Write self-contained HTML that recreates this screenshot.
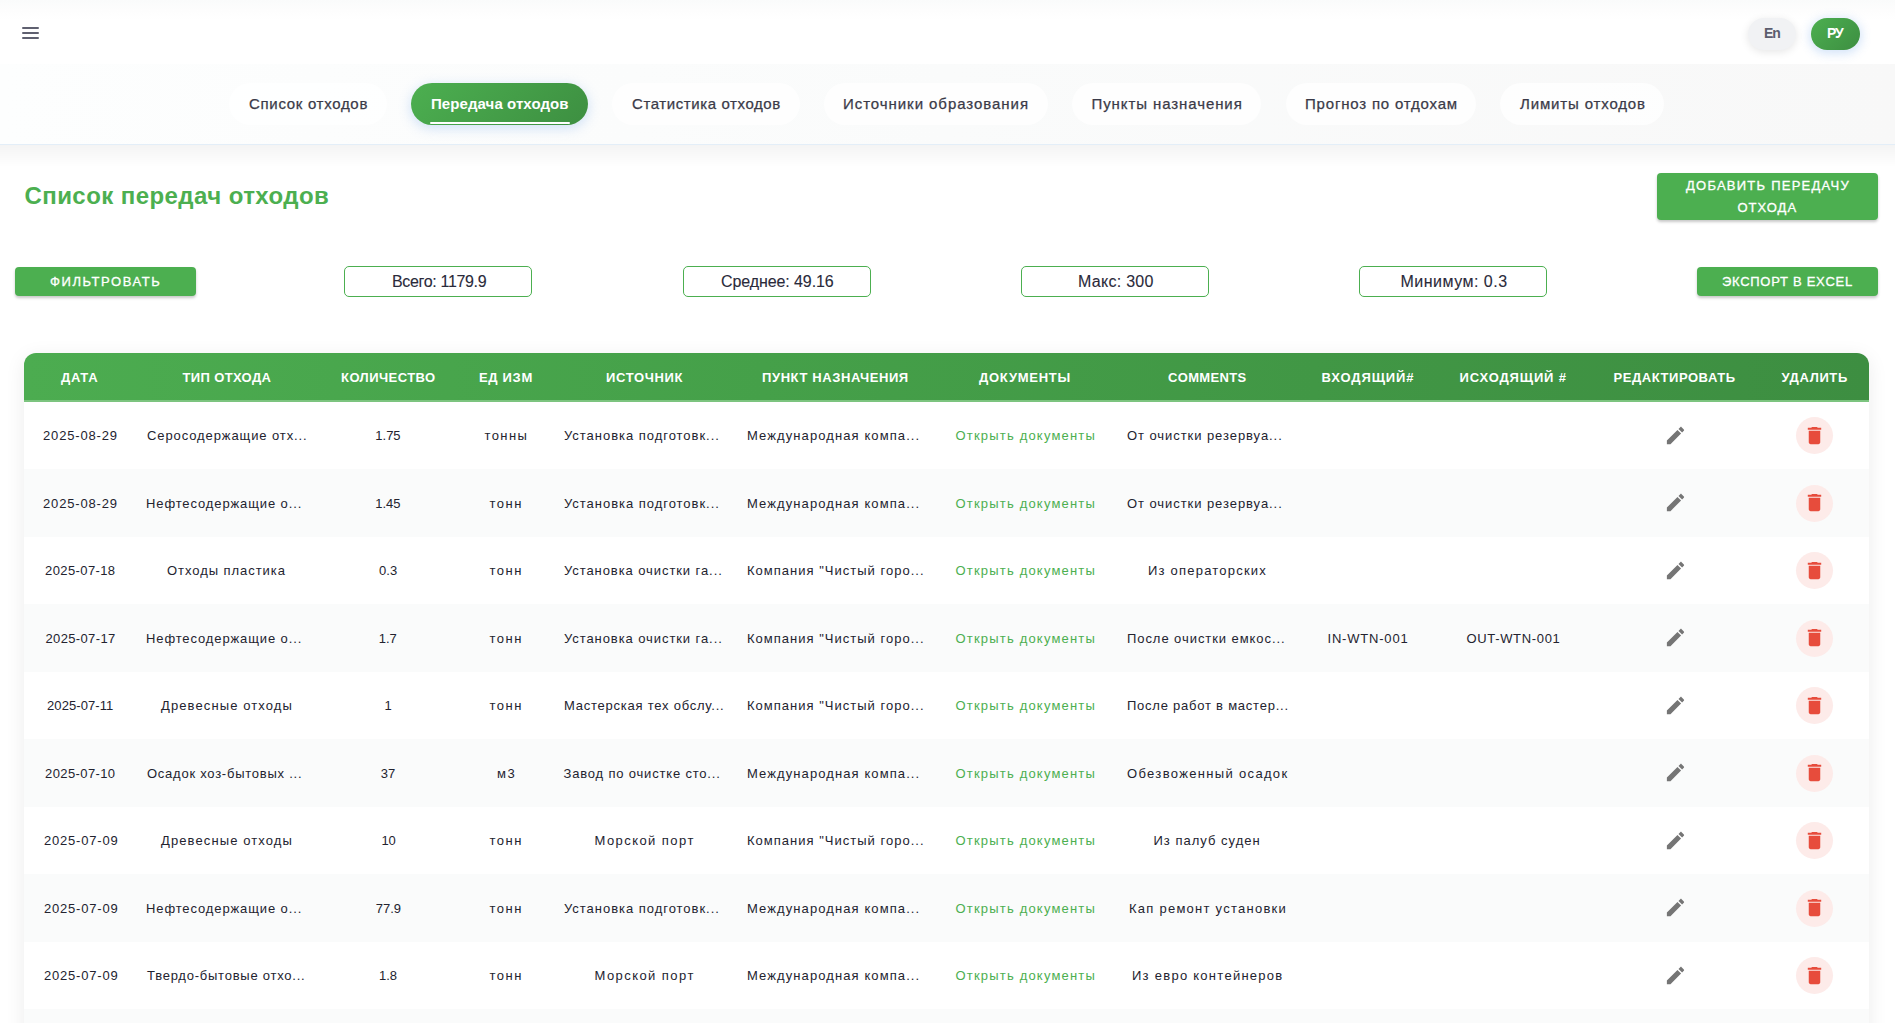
<!DOCTYPE html>
<html><head><meta charset="utf-8"><title>Передача отходов</title>
<style>
html,body{margin:0;padding:0}
body{width:1895px;height:1023px;overflow:hidden;position:relative;background:#ffffff;font-family:"Liberation Sans", sans-serif}
.t{position:absolute;white-space:nowrap;font-family:"Liberation Sans", sans-serif}
.topbar{position:absolute;left:0;top:0;width:1895px;height:64px;background:linear-gradient(180deg,#fafbfb 0px,#fdfdfd 10px,#ffffff 20px)}
.navsh{position:absolute;left:0;top:145px;width:1895px;height:22px;background:linear-gradient(180deg,rgba(0,0,0,0.045),rgba(0,0,0,0))}
.nav{position:absolute;left:0;top:64px;width:1895px;height:80px;background:linear-gradient(90deg,#fdfefe 0%,#fafbfb 50%,#f8f8f8 100%);border-bottom:1px solid #e3eef8}
.pill{position:absolute;top:83px;height:42px;border-radius:21px;background:rgba(255,255,255,0.75)}
.pill.act{background:linear-gradient(135deg,#4caf50 0%,#3d8f41 100%);box-shadow:0 3px 12px 1px rgba(120,170,235,0.3)}
.uline{position:absolute;left:430px;top:122px;width:140px;height:2px;border-radius:1px;background:#ffffff}
.ham{position:absolute;left:22px;width:17px;height:2px;background:#5f6070;border-radius:1px}
.lang{position:absolute;top:18px;height:32px;border-radius:16px}
.btn{position:absolute;background:#4caf50;border-radius:4px;box-shadow:0 2px 3px rgba(0,0,0,0.22)}
.stat{position:absolute;top:266px;height:28.6px;width:186px;border:1.5px solid #4caf50;border-radius:5px;background:#fff}
.tbl{position:absolute;left:24px;top:353px;width:1845px;height:720px;border-radius:12px;overflow:hidden;box-shadow:0 4px 20px rgba(0,0,0,0.08);background:#fff}
.thead{position:absolute;left:0;top:0;width:1845px;height:47px;background:linear-gradient(90deg,#4cac50 0%,#45a049 40%,#3d8e41 100%);border-bottom:2px solid #7cc47f}
.row{position:absolute;left:0;width:1845px}
.ic{position:absolute}
.delc{position:absolute;width:37px;height:37px;border-radius:50%;background:#fdebe9}
</style></head><body>
<div class="topbar"></div>
<div class="ham" style="top:27.4px"></div><div class="ham" style="top:32.2px"></div><div class="ham" style="top:36.9px"></div>
<div class="lang" style="left:1748px;width:48px;background:#f1f2f4;box-shadow:0 2px 8px rgba(0,0,0,0.10)"></div>
<div class="lang" style="left:1811px;width:49px;background:linear-gradient(135deg,#4caf50,#3d8e41);box-shadow:0 2px 10px 2px rgba(120,170,235,0.3)"></div>
<div class="nav"></div><div class="navsh"></div>
<div class="pill" style="left:229px;width:158px"></div>
<div class="pill act" style="left:411px;width:177px"></div>
<div class="uline"></div>
<div class="pill" style="left:612px;width:188px"></div>
<div class="pill" style="left:824px;width:224px"></div>
<div class="pill" style="left:1071.5px;width:189.5px"></div>
<div class="pill" style="left:1286px;width:190px"></div>
<div class="pill" style="left:1500px;width:164px"></div>
<div class="btn" style="left:1657px;top:173px;width:221px;height:47px"></div>
<div class="btn" style="left:15px;top:267px;width:181px;height:29px"></div>
<div class="btn" style="left:1697px;top:267px;width:181px;height:29px"></div>
<div class="stat" style="left:344px"></div>
<div class="stat" style="left:683px"></div>
<div class="stat" style="left:1021px"></div>
<div class="stat" style="left:1359px"></div>
<div class="tbl">
<div class="row" style="top:48.60px;height:68.00px;background:#ffffff"></div><div class="row" style="top:116.10px;height:68.00px;background:#fafbfb"></div><div class="row" style="top:183.60px;height:68.00px;background:#ffffff"></div><div class="row" style="top:251.10px;height:68.00px;background:#fafbfb"></div><div class="row" style="top:318.60px;height:68.00px;background:#ffffff"></div><div class="row" style="top:386.10px;height:68.00px;background:#fafbfb"></div><div class="row" style="top:453.60px;height:68.00px;background:#ffffff"></div><div class="row" style="top:521.10px;height:68.00px;background:#fafbfb"></div><div class="row" style="top:588.60px;height:68.00px;background:#ffffff"></div><div class="row" style="top:656.10px;height:68.00px;background:#fafbfb"></div>
<div class="thead"></div>
</div>
<svg class="ic" style="left:1663.6px;top:423.75px" width="23" height="23" viewBox="0 0 24 24" fill="#757575"><path d="M3 17.25V21h3.75L17.81 9.94l-3.75-3.75L3 17.25zM20.71 7.04c.39-.39.39-1.02 0-1.41l-2.34-2.34c-.39-.39-1.02-.39-1.41 0l-1.83 1.83 3.75 3.75 1.83-1.83z"/></svg><div class="delc" style="left:1795.9px;top:417.15px"></div><svg class="ic" style="left:1802.7px;top:423.85px" width="23" height="23" viewBox="0 0 24 24" fill="#e74c3c"><path d="M6 19c0 1.1.9 2 2 2h8c1.1 0 2-.9 2-2V7H6v12zM19 4h-3.5l-1-1h-5l-1 1H5v2h14V4z"/></svg><svg class="ic" style="left:1663.6px;top:491.25px" width="23" height="23" viewBox="0 0 24 24" fill="#757575"><path d="M3 17.25V21h3.75L17.81 9.94l-3.75-3.75L3 17.25zM20.71 7.04c.39-.39.39-1.02 0-1.41l-2.34-2.34c-.39-.39-1.02-.39-1.41 0l-1.83 1.83 3.75 3.75 1.83-1.83z"/></svg><div class="delc" style="left:1795.9px;top:484.65px"></div><svg class="ic" style="left:1802.7px;top:491.35px" width="23" height="23" viewBox="0 0 24 24" fill="#e74c3c"><path d="M6 19c0 1.1.9 2 2 2h8c1.1 0 2-.9 2-2V7H6v12zM19 4h-3.5l-1-1h-5l-1 1H5v2h14V4z"/></svg><svg class="ic" style="left:1663.6px;top:558.75px" width="23" height="23" viewBox="0 0 24 24" fill="#757575"><path d="M3 17.25V21h3.75L17.81 9.94l-3.75-3.75L3 17.25zM20.71 7.04c.39-.39.39-1.02 0-1.41l-2.34-2.34c-.39-.39-1.02-.39-1.41 0l-1.83 1.83 3.75 3.75 1.83-1.83z"/></svg><div class="delc" style="left:1795.9px;top:552.15px"></div><svg class="ic" style="left:1802.7px;top:558.85px" width="23" height="23" viewBox="0 0 24 24" fill="#e74c3c"><path d="M6 19c0 1.1.9 2 2 2h8c1.1 0 2-.9 2-2V7H6v12zM19 4h-3.5l-1-1h-5l-1 1H5v2h14V4z"/></svg><svg class="ic" style="left:1663.6px;top:626.25px" width="23" height="23" viewBox="0 0 24 24" fill="#757575"><path d="M3 17.25V21h3.75L17.81 9.94l-3.75-3.75L3 17.25zM20.71 7.04c.39-.39.39-1.02 0-1.41l-2.34-2.34c-.39-.39-1.02-.39-1.41 0l-1.83 1.83 3.75 3.75 1.83-1.83z"/></svg><div class="delc" style="left:1795.9px;top:619.65px"></div><svg class="ic" style="left:1802.7px;top:626.35px" width="23" height="23" viewBox="0 0 24 24" fill="#e74c3c"><path d="M6 19c0 1.1.9 2 2 2h8c1.1 0 2-.9 2-2V7H6v12zM19 4h-3.5l-1-1h-5l-1 1H5v2h14V4z"/></svg><svg class="ic" style="left:1663.6px;top:693.75px" width="23" height="23" viewBox="0 0 24 24" fill="#757575"><path d="M3 17.25V21h3.75L17.81 9.94l-3.75-3.75L3 17.25zM20.71 7.04c.39-.39.39-1.02 0-1.41l-2.34-2.34c-.39-.39-1.02-.39-1.41 0l-1.83 1.83 3.75 3.75 1.83-1.83z"/></svg><div class="delc" style="left:1795.9px;top:687.15px"></div><svg class="ic" style="left:1802.7px;top:693.85px" width="23" height="23" viewBox="0 0 24 24" fill="#e74c3c"><path d="M6 19c0 1.1.9 2 2 2h8c1.1 0 2-.9 2-2V7H6v12zM19 4h-3.5l-1-1h-5l-1 1H5v2h14V4z"/></svg><svg class="ic" style="left:1663.6px;top:761.25px" width="23" height="23" viewBox="0 0 24 24" fill="#757575"><path d="M3 17.25V21h3.75L17.81 9.94l-3.75-3.75L3 17.25zM20.71 7.04c.39-.39.39-1.02 0-1.41l-2.34-2.34c-.39-.39-1.02-.39-1.41 0l-1.83 1.83 3.75 3.75 1.83-1.83z"/></svg><div class="delc" style="left:1795.9px;top:754.65px"></div><svg class="ic" style="left:1802.7px;top:761.35px" width="23" height="23" viewBox="0 0 24 24" fill="#e74c3c"><path d="M6 19c0 1.1.9 2 2 2h8c1.1 0 2-.9 2-2V7H6v12zM19 4h-3.5l-1-1h-5l-1 1H5v2h14V4z"/></svg><svg class="ic" style="left:1663.6px;top:828.75px" width="23" height="23" viewBox="0 0 24 24" fill="#757575"><path d="M3 17.25V21h3.75L17.81 9.94l-3.75-3.75L3 17.25zM20.71 7.04c.39-.39.39-1.02 0-1.41l-2.34-2.34c-.39-.39-1.02-.39-1.41 0l-1.83 1.83 3.75 3.75 1.83-1.83z"/></svg><div class="delc" style="left:1795.9px;top:822.15px"></div><svg class="ic" style="left:1802.7px;top:828.85px" width="23" height="23" viewBox="0 0 24 24" fill="#e74c3c"><path d="M6 19c0 1.1.9 2 2 2h8c1.1 0 2-.9 2-2V7H6v12zM19 4h-3.5l-1-1h-5l-1 1H5v2h14V4z"/></svg><svg class="ic" style="left:1663.6px;top:896.25px" width="23" height="23" viewBox="0 0 24 24" fill="#757575"><path d="M3 17.25V21h3.75L17.81 9.94l-3.75-3.75L3 17.25zM20.71 7.04c.39-.39.39-1.02 0-1.41l-2.34-2.34c-.39-.39-1.02-.39-1.41 0l-1.83 1.83 3.75 3.75 1.83-1.83z"/></svg><div class="delc" style="left:1795.9px;top:889.65px"></div><svg class="ic" style="left:1802.7px;top:896.35px" width="23" height="23" viewBox="0 0 24 24" fill="#e74c3c"><path d="M6 19c0 1.1.9 2 2 2h8c1.1 0 2-.9 2-2V7H6v12zM19 4h-3.5l-1-1h-5l-1 1H5v2h14V4z"/></svg><svg class="ic" style="left:1663.6px;top:963.75px" width="23" height="23" viewBox="0 0 24 24" fill="#757575"><path d="M3 17.25V21h3.75L17.81 9.94l-3.75-3.75L3 17.25zM20.71 7.04c.39-.39.39-1.02 0-1.41l-2.34-2.34c-.39-.39-1.02-.39-1.41 0l-1.83 1.83 3.75 3.75 1.83-1.83z"/></svg><div class="delc" style="left:1795.9px;top:957.15px"></div><svg class="ic" style="left:1802.7px;top:963.85px" width="23" height="23" viewBox="0 0 24 24" fill="#e74c3c"><path d="M6 19c0 1.1.9 2 2 2h8c1.1 0 2-.9 2-2V7H6v12zM19 4h-3.5l-1-1h-5l-1 1H5v2h14V4z"/></svg><svg class="ic" style="left:1663.6px;top:1031.25px" width="23" height="23" viewBox="0 0 24 24" fill="#757575"><path d="M3 17.25V21h3.75L17.81 9.94l-3.75-3.75L3 17.25zM20.71 7.04c.39-.39.39-1.02 0-1.41l-2.34-2.34c-.39-.39-1.02-.39-1.41 0l-1.83 1.83 3.75 3.75 1.83-1.83z"/></svg><div class="delc" style="left:1795.9px;top:1024.65px"></div><svg class="ic" style="left:1802.7px;top:1031.35px" width="23" height="23" viewBox="0 0 24 24" fill="#e74c3c"><path d="M6 19c0 1.1.9 2 2 2h8c1.1 0 2-.9 2-2V7H6v12zM19 4h-3.5l-1-1h-5l-1 1H5v2h14V4z"/></svg>
<span id="t0" class="t" style="left:249.00px;top:93.60px;font-size:15px;line-height:19px;font-weight:400;color:#3a3a48;letter-spacing:0.692px;-webkit-text-stroke-width:0.25px">Список отходов</span>
<span id="t1" class="t" style="left:431.00px;top:93.60px;font-size:15px;line-height:19px;font-weight:700;color:#ffffff;letter-spacing:0.080px;">Передача отходов</span>
<span id="t2" class="t" style="left:632.00px;top:93.60px;font-size:15px;line-height:19px;font-weight:400;color:#3a3a48;letter-spacing:0.588px;-webkit-text-stroke-width:0.25px">Статистика отходов</span>
<span id="t3" class="t" style="left:843.00px;top:93.60px;font-size:15px;line-height:19px;font-weight:400;color:#3a3a48;letter-spacing:0.950px;-webkit-text-stroke-width:0.25px">Источники образования</span>
<span id="t4" class="t" style="left:1091.50px;top:93.60px;font-size:15px;line-height:19px;font-weight:400;color:#3a3a48;letter-spacing:0.912px;-webkit-text-stroke-width:0.25px">Пункты назначения</span>
<span id="t5" class="t" style="left:1305.00px;top:93.60px;font-size:15px;line-height:19px;font-weight:400;color:#3a3a48;letter-spacing:0.812px;-webkit-text-stroke-width:0.25px">Прогноз по отдохам</span>
<span id="t6" class="t" style="left:1520.00px;top:93.60px;font-size:15px;line-height:19px;font-weight:400;color:#3a3a48;letter-spacing:0.846px;-webkit-text-stroke-width:0.25px">Лимиты отходов</span>
<span id="t7" class="t" style="left:1764.00px;top:24.14px;font-size:14px;line-height:18px;font-weight:700;color:#5c5d6e;letter-spacing:-1.200px;">En</span>
<span id="t8" class="t" style="left:1827.00px;top:24.14px;font-size:14px;line-height:18px;font-weight:700;color:#ffffff;letter-spacing:-1.200px;">РУ</span>
<span id="t9" class="t" style="left:24.50px;top:181.68px;font-size:24px;line-height:28px;font-weight:700;color:#4caf50;letter-spacing:0.429px;">Список передач отходов</span>
<span id="t10" class="t" style="left:50.00px;top:272.99px;font-size:13px;line-height:17px;font-weight:400;color:#ffffff;letter-spacing:1.600px;-webkit-text-stroke-width:0.3px">ФИЛЬТРОВАТЬ</span>
<span id="t11" class="t" style="left:1686.00px;top:176.99px;font-size:13px;line-height:17px;font-weight:400;color:#ffffff;letter-spacing:1.250px;-webkit-text-stroke-width:0.3px">ДОБАВИТЬ ПЕРЕДАЧУ</span>
<span id="t12" class="t" style="left:1737.50px;top:199.49px;font-size:13px;line-height:17px;font-weight:400;color:#ffffff;letter-spacing:1.000px;-webkit-text-stroke-width:0.3px">ОТХОДА</span>
<span id="t13" class="t" style="left:1722.00px;top:272.99px;font-size:13px;line-height:17px;font-weight:400;color:#ffffff;letter-spacing:0.714px;-webkit-text-stroke-width:0.3px">ЭКСПОРТ В EXCEL</span>
<span id="t14" class="t" style="left:392.00px;top:272.45px;font-size:16px;line-height:20px;font-weight:400;color:#2a2a3a;letter-spacing:-0.333px;-webkit-text-stroke-width:0.1px">Всего: 1179.9</span>
<span id="t15" class="t" style="left:721.00px;top:272.45px;font-size:16px;line-height:20px;font-weight:400;color:#2a2a3a;letter-spacing:-0.092px;-webkit-text-stroke-width:0.1px">Среднее: 49.16</span>
<span id="t16" class="t" style="left:1078.00px;top:272.45px;font-size:16px;line-height:20px;font-weight:400;color:#2a2a3a;letter-spacing:0.275px;-webkit-text-stroke-width:0.1px">Макс: 300</span>
<span id="t17" class="t" style="left:1400.50px;top:272.45px;font-size:16px;line-height:20px;font-weight:400;color:#2a2a3a;letter-spacing:0.491px;-webkit-text-stroke-width:0.1px">Минимум: 0.3</span>
<span id="t18" class="t" style="left:61.00px;top:369.29px;font-size:13px;line-height:17px;font-weight:700;color:#ffffff;letter-spacing:0.667px;">ДАТА</span>
<span id="t19" class="t" style="left:182.50px;top:369.29px;font-size:13px;line-height:17px;font-weight:700;color:#ffffff;letter-spacing:0.356px;">ТИП ОТХОДА</span>
<span id="t20" class="t" style="left:341.00px;top:369.29px;font-size:13px;line-height:17px;font-weight:700;color:#ffffff;letter-spacing:0.444px;">КОЛИЧЕСТВО</span>
<span id="t21" class="t" style="left:479.00px;top:369.29px;font-size:13px;line-height:17px;font-weight:700;color:#ffffff;letter-spacing:0.680px;">ЕД ИЗМ</span>
<span id="t22" class="t" style="left:606.00px;top:369.29px;font-size:13px;line-height:17px;font-weight:700;color:#ffffff;letter-spacing:0.629px;">ИСТОЧНИК</span>
<span id="t23" class="t" style="left:762.00px;top:369.29px;font-size:13px;line-height:17px;font-weight:700;color:#ffffff;letter-spacing:0.600px;">ПУНКТ НАЗНАЧЕНИЯ</span>
<span id="t24" class="t" style="left:979.00px;top:369.29px;font-size:13px;line-height:17px;font-weight:700;color:#ffffff;letter-spacing:0.750px;">ДОКУМЕНТЫ</span>
<span id="t25" class="t" style="left:1168.00px;top:369.29px;font-size:13px;line-height:17px;font-weight:700;color:#ffffff;letter-spacing:0.343px;">COMMENTS</span>
<span id="t26" class="t" style="left:1321.50px;top:369.29px;font-size:13px;line-height:17px;font-weight:700;color:#ffffff;letter-spacing:0.875px;">ВХОДЯЩИЙ#</span>
<span id="t27" class="t" style="left:1459.50px;top:369.29px;font-size:13px;line-height:17px;font-weight:700;color:#ffffff;letter-spacing:0.860px;">ИСХОДЯЩИЙ #</span>
<span id="t28" class="t" style="left:1613.50px;top:369.29px;font-size:13px;line-height:17px;font-weight:700;color:#ffffff;letter-spacing:0.550px;">РЕДАКТИРОВАТЬ</span>
<span id="t29" class="t" style="left:1781.50px;top:369.29px;font-size:13px;line-height:17px;font-weight:700;color:#ffffff;letter-spacing:0.633px;">УДАЛИТЬ</span>
<span id="t30" class="t" style="left:43.00px;top:427.09px;font-size:13px;line-height:17px;font-weight:400;color:#23232f;letter-spacing:0.844px;">2025-08-29</span>
<span id="t31" class="t" style="left:147.00px;top:427.09px;font-size:13px;line-height:17px;font-weight:400;color:#23232f;letter-spacing:0.900px;">Серосодержащие отх...</span>
<span id="t32" class="t" style="left:375.30px;top:427.09px;font-size:13px;line-height:17px;font-weight:400;color:#23232f;letter-spacing:0.000px;">1.75</span>
<span id="t33" class="t" style="left:484.50px;top:427.09px;font-size:13px;line-height:17px;font-weight:400;color:#23232f;letter-spacing:1.400px;">тонны</span>
<span id="t34" class="t" style="left:564.00px;top:427.09px;font-size:13px;line-height:17px;font-weight:400;color:#23232f;letter-spacing:0.971px;">Установка подготовк...</span>
<span id="t35" class="t" style="left:747.00px;top:427.09px;font-size:13px;line-height:17px;font-weight:400;color:#23232f;letter-spacing:1.095px;">Международная компа...</span>
<span id="t36" class="t" style="left:955.50px;top:427.09px;font-size:13px;line-height:17px;font-weight:400;color:#4caf50;letter-spacing:1.188px;">Открыть документы</span>
<span id="t37" class="t" style="left:1127.00px;top:427.09px;font-size:13px;line-height:17px;font-weight:400;color:#23232f;letter-spacing:0.933px;">От очистки резервуа...</span>
<span id="t38" class="t" style="left:43.00px;top:494.59px;font-size:13px;line-height:17px;font-weight:400;color:#23232f;letter-spacing:0.844px;">2025-08-29</span>
<span id="t39" class="t" style="left:146.00px;top:494.59px;font-size:13px;line-height:17px;font-weight:400;color:#23232f;letter-spacing:0.884px;">Нефтесодержащие о...</span>
<span id="t40" class="t" style="left:375.20px;top:494.59px;font-size:13px;line-height:17px;font-weight:400;color:#23232f;letter-spacing:0.000px;">1.45</span>
<span id="t41" class="t" style="left:489.50px;top:494.59px;font-size:13px;line-height:17px;font-weight:400;color:#23232f;letter-spacing:1.533px;">тонн</span>
<span id="t42" class="t" style="left:564.00px;top:494.59px;font-size:13px;line-height:17px;font-weight:400;color:#23232f;letter-spacing:0.971px;">Установка подготовк...</span>
<span id="t43" class="t" style="left:747.00px;top:494.59px;font-size:13px;line-height:17px;font-weight:400;color:#23232f;letter-spacing:1.095px;">Международная компа...</span>
<span id="t44" class="t" style="left:955.50px;top:494.59px;font-size:13px;line-height:17px;font-weight:400;color:#4caf50;letter-spacing:1.188px;">Открыть документы</span>
<span id="t45" class="t" style="left:1127.00px;top:494.59px;font-size:13px;line-height:17px;font-weight:400;color:#23232f;letter-spacing:0.933px;">От очистки резервуа...</span>
<span id="t46" class="t" style="left:45.00px;top:562.09px;font-size:13px;line-height:17px;font-weight:400;color:#23232f;letter-spacing:0.400px;">2025-07-18</span>
<span id="t47" class="t" style="left:167.00px;top:562.09px;font-size:13px;line-height:17px;font-weight:400;color:#23232f;letter-spacing:0.943px;">Отходы пластика</span>
<span id="t48" class="t" style="left:379.10px;top:562.09px;font-size:13px;line-height:17px;font-weight:400;color:#23232f;letter-spacing:0.000px;">0.3</span>
<span id="t49" class="t" style="left:489.50px;top:562.09px;font-size:13px;line-height:17px;font-weight:400;color:#23232f;letter-spacing:1.533px;">тонн</span>
<span id="t50" class="t" style="left:564.00px;top:562.09px;font-size:13px;line-height:17px;font-weight:400;color:#23232f;letter-spacing:0.918px;">Установка очистки га...</span>
<span id="t51" class="t" style="left:747.00px;top:562.09px;font-size:13px;line-height:17px;font-weight:400;color:#23232f;letter-spacing:1.009px;">Компания "Чистый горо...</span>
<span id="t52" class="t" style="left:955.50px;top:562.09px;font-size:13px;line-height:17px;font-weight:400;color:#4caf50;letter-spacing:1.188px;">Открыть документы</span>
<span id="t53" class="t" style="left:1148.00px;top:562.09px;font-size:13px;line-height:17px;font-weight:400;color:#23232f;letter-spacing:1.214px;">Из операторских</span>
<span id="t54" class="t" style="left:45.50px;top:629.59px;font-size:13px;line-height:17px;font-weight:400;color:#23232f;letter-spacing:0.356px;">2025-07-17</span>
<span id="t55" class="t" style="left:146.00px;top:629.59px;font-size:13px;line-height:17px;font-weight:400;color:#23232f;letter-spacing:0.884px;">Нефтесодержащие о...</span>
<span id="t56" class="t" style="left:378.70px;top:629.59px;font-size:13px;line-height:17px;font-weight:400;color:#23232f;letter-spacing:0.000px;">1.7</span>
<span id="t57" class="t" style="left:489.50px;top:629.59px;font-size:13px;line-height:17px;font-weight:400;color:#23232f;letter-spacing:1.533px;">тонн</span>
<span id="t58" class="t" style="left:564.00px;top:629.59px;font-size:13px;line-height:17px;font-weight:400;color:#23232f;letter-spacing:0.918px;">Установка очистки га...</span>
<span id="t59" class="t" style="left:747.00px;top:629.59px;font-size:13px;line-height:17px;font-weight:400;color:#23232f;letter-spacing:1.009px;">Компания "Чистый горо...</span>
<span id="t60" class="t" style="left:955.50px;top:629.59px;font-size:13px;line-height:17px;font-weight:400;color:#4caf50;letter-spacing:1.188px;">Открыть документы</span>
<span id="t61" class="t" style="left:1127.00px;top:629.59px;font-size:13px;line-height:17px;font-weight:400;color:#23232f;letter-spacing:0.933px;">После очистки емкос...</span>
<span id="t62" class="t" style="left:1327.50px;top:629.59px;font-size:13px;line-height:17px;font-weight:400;color:#23232f;letter-spacing:0.800px;">IN-WTN-001</span>
<span id="t63" class="t" style="left:1466.50px;top:629.59px;font-size:13px;line-height:17px;font-weight:400;color:#23232f;letter-spacing:0.660px;">OUT-WTN-001</span>
<span id="t64" class="t" style="left:47.00px;top:697.09px;font-size:13px;line-height:17px;font-weight:400;color:#23232f;letter-spacing:0.089px;">2025-07-11</span>
<span id="t65" class="t" style="left:161.00px;top:697.09px;font-size:13px;line-height:17px;font-weight:400;color:#23232f;letter-spacing:1.107px;">Древесные отходы</span>
<span id="t66" class="t" style="left:384.60px;top:697.09px;font-size:13px;line-height:17px;font-weight:400;color:#23232f;letter-spacing:0.000px;">1</span>
<span id="t67" class="t" style="left:489.50px;top:697.09px;font-size:13px;line-height:17px;font-weight:400;color:#23232f;letter-spacing:1.533px;">тонн</span>
<span id="t68" class="t" style="left:564.00px;top:697.09px;font-size:13px;line-height:17px;font-weight:400;color:#23232f;letter-spacing:0.764px;">Мастерская тех обслу...</span>
<span id="t69" class="t" style="left:747.00px;top:697.09px;font-size:13px;line-height:17px;font-weight:400;color:#23232f;letter-spacing:1.009px;">Компания "Чистый горо...</span>
<span id="t70" class="t" style="left:955.50px;top:697.09px;font-size:13px;line-height:17px;font-weight:400;color:#4caf50;letter-spacing:1.188px;">Открыть документы</span>
<span id="t71" class="t" style="left:1127.00px;top:697.09px;font-size:13px;line-height:17px;font-weight:400;color:#23232f;letter-spacing:0.764px;">После работ в мастер...</span>
<span id="t72" class="t" style="left:45.00px;top:764.59px;font-size:13px;line-height:17px;font-weight:400;color:#23232f;letter-spacing:0.400px;">2025-07-10</span>
<span id="t73" class="t" style="left:147.00px;top:764.59px;font-size:13px;line-height:17px;font-weight:400;color:#23232f;letter-spacing:0.752px;">Осадок хоз-бытовых ...</span>
<span id="t74" class="t" style="left:380.70px;top:764.59px;font-size:13px;line-height:17px;font-weight:400;color:#23232f;letter-spacing:0.000px;">37</span>
<span id="t75" class="t" style="left:497.00px;top:764.59px;font-size:13px;line-height:17px;font-weight:400;color:#23232f;letter-spacing:1.600px;">м3</span>
<span id="t76" class="t" style="left:563.50px;top:764.59px;font-size:13px;line-height:17px;font-weight:400;color:#23232f;letter-spacing:0.818px;">Завод по очистке сто...</span>
<span id="t77" class="t" style="left:747.00px;top:764.59px;font-size:13px;line-height:17px;font-weight:400;color:#23232f;letter-spacing:1.095px;">Международная компа...</span>
<span id="t78" class="t" style="left:955.50px;top:764.59px;font-size:13px;line-height:17px;font-weight:400;color:#4caf50;letter-spacing:1.188px;">Открыть документы</span>
<span id="t79" class="t" style="left:1127.00px;top:764.59px;font-size:13px;line-height:17px;font-weight:400;color:#23232f;letter-spacing:1.333px;">Обезвоженный осадок</span>
<span id="t80" class="t" style="left:44.00px;top:832.09px;font-size:13px;line-height:17px;font-weight:400;color:#23232f;letter-spacing:0.800px;">2025-07-09</span>
<span id="t81" class="t" style="left:161.00px;top:832.09px;font-size:13px;line-height:17px;font-weight:400;color:#23232f;letter-spacing:1.107px;">Древесные отходы</span>
<span id="t82" class="t" style="left:381.40px;top:832.09px;font-size:13px;line-height:17px;font-weight:400;color:#23232f;letter-spacing:0.000px;">10</span>
<span id="t83" class="t" style="left:489.50px;top:832.09px;font-size:13px;line-height:17px;font-weight:400;color:#23232f;letter-spacing:1.533px;">тонн</span>
<span id="t84" class="t" style="left:594.50px;top:832.09px;font-size:13px;line-height:17px;font-weight:400;color:#23232f;letter-spacing:1.436px;">Морской порт</span>
<span id="t85" class="t" style="left:747.00px;top:832.09px;font-size:13px;line-height:17px;font-weight:400;color:#23232f;letter-spacing:1.009px;">Компания "Чистый горо...</span>
<span id="t86" class="t" style="left:955.50px;top:832.09px;font-size:13px;line-height:17px;font-weight:400;color:#4caf50;letter-spacing:1.188px;">Открыть документы</span>
<span id="t87" class="t" style="left:1153.50px;top:832.09px;font-size:13px;line-height:17px;font-weight:400;color:#23232f;letter-spacing:1.015px;">Из палуб суден</span>
<span id="t88" class="t" style="left:44.00px;top:899.59px;font-size:13px;line-height:17px;font-weight:400;color:#23232f;letter-spacing:0.800px;">2025-07-09</span>
<span id="t89" class="t" style="left:146.00px;top:899.59px;font-size:13px;line-height:17px;font-weight:400;color:#23232f;letter-spacing:0.884px;">Нефтесодержащие о...</span>
<span id="t90" class="t" style="left:375.70px;top:899.59px;font-size:13px;line-height:17px;font-weight:400;color:#23232f;letter-spacing:0.000px;">77.9</span>
<span id="t91" class="t" style="left:489.50px;top:899.59px;font-size:13px;line-height:17px;font-weight:400;color:#23232f;letter-spacing:1.533px;">тонн</span>
<span id="t92" class="t" style="left:564.00px;top:899.59px;font-size:13px;line-height:17px;font-weight:400;color:#23232f;letter-spacing:0.971px;">Установка подготовк...</span>
<span id="t93" class="t" style="left:747.00px;top:899.59px;font-size:13px;line-height:17px;font-weight:400;color:#23232f;letter-spacing:1.095px;">Международная компа...</span>
<span id="t94" class="t" style="left:955.50px;top:899.59px;font-size:13px;line-height:17px;font-weight:400;color:#4caf50;letter-spacing:1.188px;">Открыть документы</span>
<span id="t95" class="t" style="left:1129.00px;top:899.59px;font-size:13px;line-height:17px;font-weight:400;color:#23232f;letter-spacing:1.253px;">Кап ремонт установки</span>
<span id="t96" class="t" style="left:44.00px;top:967.09px;font-size:13px;line-height:17px;font-weight:400;color:#23232f;letter-spacing:0.800px;">2025-07-09</span>
<span id="t97" class="t" style="left:147.00px;top:967.09px;font-size:13px;line-height:17px;font-weight:400;color:#23232f;letter-spacing:0.762px;">Твердо-бытовые отхо...</span>
<span id="t98" class="t" style="left:379.00px;top:967.09px;font-size:13px;line-height:17px;font-weight:400;color:#23232f;letter-spacing:0.000px;">1.8</span>
<span id="t99" class="t" style="left:489.50px;top:967.09px;font-size:13px;line-height:17px;font-weight:400;color:#23232f;letter-spacing:1.533px;">тонн</span>
<span id="t100" class="t" style="left:594.50px;top:967.09px;font-size:13px;line-height:17px;font-weight:400;color:#23232f;letter-spacing:1.436px;">Морской порт</span>
<span id="t101" class="t" style="left:747.00px;top:967.09px;font-size:13px;line-height:17px;font-weight:400;color:#23232f;letter-spacing:1.095px;">Международная компа...</span>
<span id="t102" class="t" style="left:955.50px;top:967.09px;font-size:13px;line-height:17px;font-weight:400;color:#4caf50;letter-spacing:1.188px;">Открыть документы</span>
<span id="t103" class="t" style="left:1132.00px;top:967.09px;font-size:13px;line-height:17px;font-weight:400;color:#23232f;letter-spacing:1.267px;">Из евро контейнеров</span>
</body></html>
